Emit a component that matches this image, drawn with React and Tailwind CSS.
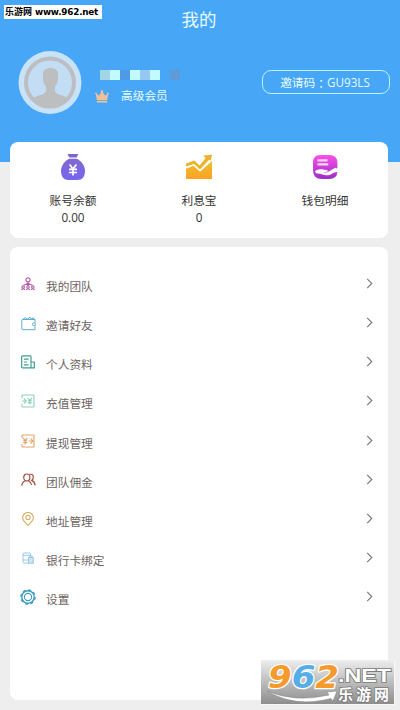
import React from 'react';

const YenSwapIcon = ({ color, reverse }) => (
    <svg className="w-[14px] h-[14px]" viewBox="0 0 14 14" fill="none" stroke={color} strokeWidth="1.1">
        <path d="M1 4V1.5Q1 1 1.5 1H12.5Q13 1 13 1.5V12.5Q13 13 12.5 13H1.5Q1 13 1 12.5V10" />
        <g transform={reverse ? 'translate(-4.6 0)' : undefined}>
            <path d="M6.6 3.8L8.8 6.6L11 3.8M8.8 6.6V10.6M6.8 6.8H10.8M6.8 8.6H10.8" />
        </g>
        <g transform={reverse ? 'translate(6.8 0)' : undefined}>
            <path d="M1 7H5M2.8 4.4L5.2 7L2.8 9.6" />
        </g>
    </svg>
);

const TeamIcon = () => (
    <svg className="w-[14px] h-[14px]" viewBox="0 0 14 14" fill="none" stroke="#b45aa8" strokeWidth="1.1">
        <circle cx="7" cy="2.8" r="2.1" />
        <path d="M7 4.9V9M7 6.2L2.4 8.6M7 6.2L11.6 8.6" />
        <circle cx="2.2" cy="10" r="1.2" />
        <circle cx="7" cy="10" r="1.2" />
        <circle cx="11.8" cy="10" r="1.2" />
        <path d="M0.4 13Q2.2 10.6 4 13M5.2 13Q7 10.6 8.8 13M10 13Q11.8 10.6 13.6 13" />
    </svg>
);

const WalletIcon = () => (
    <svg className="w-[15px] h-[15px]" viewBox="0 0 15 15" fill="none" stroke="#5aaed0" strokeWidth="1">
        <path d="M14 6V3.5H1.5Q0.8 3.5 0.8 4.2V13Q0.8 13.7 1.5 13.7H14V10.5" />
        <path d="M1.5 3.4L4.5 1.6L6 3.2L9 1.2L10.5 3.2L12.5 1.8L13.4 3.4" />
        <path d="M14.2 6.8H12.8Q11.4 7 11.4 8.3T12.8 9.8H14.2Z" />
    </svg>
);

const ProfileIcon = () => (
    <svg className="w-[14px] h-[14px]" viewBox="0 0 14 14" fill="none" stroke="#3c9f90" strokeWidth="1.2">
        <path d="M10 12.8H1.6Q0.7 12.8 0.7 12V1.7Q0.7 0.9 1.6 0.9H9.2Q10 0.9 10 1.7V12.8H13.3V7H10" />
        <path d="M3 4.2H7.6M3 7H6M3 9.8H7.6" />
    </svg>
);

const PeopleIcon = () => (
    <svg className="w-[15px] h-[14px]" viewBox="0 0 15 14" fill="none" stroke="#a4503f" strokeWidth="1.2">
        <ellipse cx="5.8" cy="4.4" rx="3.1" ry="3.4" />
        <path d="M0.8 12.8Q1 8.8 4.4 7.8M7.2 7.8Q10 8.8 10.6 12" />
        <path d="M8.6 1.4Q12.4 0.6 12.3 4.4Q12.2 6.4 10.6 7.4Q13.8 8.6 14.2 12.4" />
    </svg>
);

const PinIcon = () => (
    <svg className="w-[14px] h-[14px]" viewBox="0 0 14 14" fill="none" stroke="#d8ad62" strokeWidth="1.1">
        <path d="M7 13.4Q1.6 8.8 1.6 5.6A5.4 5.1 0 0 1 12.4 5.6Q12.4 8.8 7 13.4Z" />
        <circle cx="7" cy="5.4" r="2.1" />
    </svg>
);

const BankIcon = () => (
    <svg className="w-[12px] h-[12px]" viewBox="0 0 12 12" fill="none" stroke="#8fc4e4" strokeWidth="0.9">
        <path d="M6 11H2Q1 11 1 10V2Q1 1 2 1H7.5Q8.5 1 8.5 2V4M1 3.3H8.5M1 8H6" />
        <path d="M6.5 11.3V5.5H11.3V11.3Z" fill="#c9e6f6" />
        <path d="M7.6 5.3V4.2H10.2V5.3" />
    </svg>
);

const SettingsIcon = () => (
    <svg className="w-4 h-4" viewBox="0 0 16 16" fill="none" stroke="#3d9cbd">
        <circle cx="8" cy="8" r="6.2" strokeWidth="1.4" />
        <circle cx="8" cy="8" r="7.1" strokeWidth="1.4" strokeDasharray="2.8 2.777" />
        <circle cx="8" cy="8" r="3.6" strokeWidth="1.1" />
    </svg>
);

const menuItems = [
    { label: '我的团队', icon: <TeamIcon /> },
    { label: '邀请好友', icon: <WalletIcon /> },
    { label: '个人资料', icon: <ProfileIcon /> },
    { label: '充值管理', icon: <YenSwapIcon color="#8fd0b8" /> },
    { label: '提现管理', icon: <YenSwapIcon color="#e2a468" reverse /> },
    { label: '团队佣金', icon: <PeopleIcon /> },
    { label: '地址管理', icon: <PinIcon /> },
    { label: '银行卡绑定', icon: <BankIcon /> },
    { label: '设置', icon: <SettingsIcon /> },
];

const MoneyBagIcon = () => (
    <svg className="w-[26px] h-[28px]" viewBox="0 0 26 28">
        <defs>
            <linearGradient id="bag" x1="0" y1="0" x2="0" y2="1">
                <stop offset="0" stopColor="#8468d0" />
                <stop offset="1" stopColor="#7566ee" />
            </linearGradient>
        </defs>
        <path d="M8 1H18Q18.6 1 18 1.8L16.6 4.6H9.4L7.8 1.8Q7.5 1 8 1Z" fill="#8065cc" />
        <path d="M9.3 5.8H16.7C22 8.5 25 13.2 25 18C25 23.8 22 27 17.5 27H8.5C4 27 1 23.8 1 18C1 13.2 4 8.5 9.3 5.8Z" fill="url(#bag)" />
        <path d="M9.6 11.5L13 16L16.4 11.5M13 16V22.6M9 16.4H17M9 19.5H17" fill="none" stroke="#fff" strokeWidth="1.7" />
    </svg>
);

const GrowthIcon = () => (
    <svg className="w-[28px] h-[26px]" viewBox="0 0 28 26">
        <defs>
            <linearGradient id="growth" x1="0" y1="0" x2="0" y2="1">
                <stop offset="0" stopColor="#e8c22d" />
                <stop offset="1" stopColor="#ffa024" />
            </linearGradient>
        </defs>
        <path d="M1 25V14.8L8.5 11.8L15 17.8L27 7V25Z" fill="url(#growth)" />
        <path d="M1 12.6V9.6L9.5 6.6L14.5 11.5L20.5 4.2L18.2 1.6L27 0.8L25.8 6.4L23.8 6L15 15.6L9 10Z" fill="#ebb42a" />
    </svg>
);

const WalletDetailIcon = () => (
    <svg className="w-[26px] h-[26px]" viewBox="0 0 26 26">
        <defs>
            <linearGradient id="detail" x1="0" y1="0" x2="0" y2="1">
                <stop offset="0" stopColor="#fc4eea" />
                <stop offset="1" stopColor="#9b2fc7" />
            </linearGradient>
        </defs>
        <path d="M8 1H17Q25.4 1 25.4 9V17Q25.4 25 17 25H10Q1 25 1 16V9Q1 1 8 1Z" fill="url(#detail)" />
        <path d="M5.5 6.3H15.5M5.5 10.3H16.3" stroke="#ffd9fa" strokeWidth="2.2" />
        <path d="M3 17Q6 14.8 9.8 15.2L14.5 16Q16.8 16.6 15 17.8L11.5 18.2Q15 19.2 18 16.8L22.5 14.2Q24.3 13.2 24.4 14.6L26 14V18Q22 17.8 20 19.7Q17 22.2 12.5 20.9Q7.8 19.2 4 19.2Z" fill="#fff" />
    </svg>
);

const stats = [
    { label: '账号余额', value: '0.00', icon: <MoneyBagIcon /> },
    { label: '利息宝', value: '0', icon: <GrowthIcon /> },
    { label: '钱包明细', value: '', icon: <WalletDetailIcon /> },
];

const Avatar = () => (
    <svg className="w-16 h-[63px]" viewBox="0 0 64 63">
        <defs>
            <clipPath id="face">
                <circle cx="32" cy="31.5" r="24" />
            </clipPath>
        </defs>
        <circle cx="32" cy="31.5" r="31.5" fill="#c8e2f8" />
        <circle cx="32" cy="31.5" r="24" fill="#c3ddf4" stroke="#bdbec2" strokeWidth="4" />
        <g clipPath="url(#face)" fill="#bdbebf">
            <path d="M25 25Q24 17 32.5 17T40 25Q40.5 32 37 35.5V40Q38 43 44 44.5Q52 47 54 51V60H10V51Q13 47 21 44.5Q27 43 28 40V35.5Q24.5 32 25 25Z" />
        </g>
    </svg>
);

const CrownIcon = () => (
    <svg className="w-[14px] h-[13px]" viewBox="0 0 14 13" fill="#ecc29a">
        <path d="M0.8 3.6L4 5.5L7 1L10 5.5L13.2 3.6L12.2 10H1.8Z" />
        <path d="M1.8 10.7H12.2V12.6H1.8Z" />
        <circle cx="1" cy="3.4" r="0.9" />
        <circle cx="7" cy="1.4" r="1.2" />
        <circle cx="13" cy="3.4" r="0.9" />
    </svg>
);

const Watermark = () => (
    <div className="absolute left-[261px] top-[660px] w-[134px] h-[45px] bg-linear-to-b from-[#eeeeee] to-[#8e8e8e] border-r border-b border-[#f8f8f8]">
        <svg className="w-full h-full overflow-visible" viewBox="0 0 133 44" fontFamily="'Liberation Sans', 'Noto Sans CJK SC', sans-serif" fontWeight="700">
            <text x="7" y="27.5" fontSize="32" fontFamily="'DejaVu Sans', sans-serif" fontStyle="italic" stroke="#fff" strokeWidth="2.5" paintOrder="stroke" strokeLinejoin="round" textLength="71" lengthAdjust="spacingAndGlyphs">
                <tspan fill="#f59a2c">9</tspan>
                <tspan fill="#55aee8">6</tspan>
                <tspan fill="#f59a2c">2</tspan>
            </text>
            <path d="M6 31Q34 43 68 35L66 32L76 31L72 41L70 38.5Q34 48 6 31Z" fill="#fff" stroke="#8a8a8a" strokeWidth="0.6" />
            <g fill="#fff" stroke="#7c7c7c" strokeWidth="1.6" paintOrder="stroke">
                <text x="77" y="22" fontSize="19" textLength="53" lengthAdjust="spacingAndGlyphs">.NET</text>
                <text x="77" y="40" fontSize="15" textLength="51">乐游网</text>
            </g>
        </svg>
    </div>
);

const App = () => {
    return (
        <div className="relative w-[400px] h-[710px] overflow-hidden bg-[#eeeeee] font-['Open_Sans','Noto_Sans_CJK_SC',sans-serif]">
            {/* Header */}
            <div className="h-[162px] bg-[#48a6f6] text-[#e4fbff]">
                <h1 className="h-[51px] pt-[8px] pr-[2px] text-center text-[17.5px] leading-[22px] font-normal">我的</h1>
                <div className="flex pl-[18px] pr-[10px]">
                    <Avatar />
                    <div className="ml-[13px] pt-[19px]">
                        <div className="flex ml-[5px] h-[10px]">
                            <span className="w-[10px] bg-[#a2d6e4]"></span>
                            <span className="w-[10px] bg-[#c3fafe]"></span>
                            <span className="w-[10px] bg-[#5099e4]"></span>
                            <span className="w-[10px] bg-[#c3fafe]"></span>
                            <span className="w-[10px] bg-[#96c8f2]"></span>
                            <span className="w-[10px] bg-[#c3fafe]"></span>
                            <span className="w-[10px]"></span>
                            <span className="w-[10px] bg-[#609bd8]"></span>
                        </div>
                        <div className="flex items-center mt-[7px] h-[18px] text-[11.7px]">
                            <CrownIcon />
                            <span className="ml-[12px]">高级会员</span>
                        </div>
                    </div>
                    <div className="ml-auto mt-[19px] w-[128px] h-6 rounded-[9px] border border-[#bdf3fb] flex items-center justify-center pr-[2px] pt-px text-[11.7px] whitespace-nowrap">
                        邀请码<span className="font-['Noto_Sans_CJK_TC',sans-serif]">：</span>GU93LS
                    </div>
                </div>
            </div>

            {/* Balance card */}
            <div className="relative mt-[-20px] ml-[10px] w-[378px] h-24 rounded-[8px] bg-white grid grid-cols-3">
                {stats.map(stat => (
                    <div key={stat.label} className="flex flex-col items-center pt-[10px] text-[11.7px] leading-[17px] text-[#333333]">
                        <div className="h-[30px] flex items-center">{stat.icon}</div>
                        <p className="mt-[10px]">{stat.label}</p>
                        <p>{stat.value}</p>
                    </div>
                ))}
            </div>

            {/* Menu */}
            <div className="mt-[9px] ml-[10px] w-[378px] h-[453px] rounded-[8px] bg-white pt-[19px]">
                {menuItems.map(item => (
                    <div key={item.label} className="flex items-center h-[39.15px] pl-[10px] pr-[15px]">
                        <div className="w-4 flex justify-center pb-[3px]">{item.icon}</div>
                        <span className="ml-[10px] pt-[2px] text-[11.7px] leading-[17px] text-[#6c6462]">{item.label}</span>
                        <svg className="ml-auto mb-[4px] w-[7px] h-[11px]" viewBox="0 0 7 11" fill="none" stroke="#777777" strokeWidth="1.1">
                            <path d="M1.2 0.8L5.8 5.5L1.2 10.2" />
                        </svg>
                    </div>
                ))}
            </div>

            {/* Site tags */}
            <div className="absolute left-1 top-[5px] w-[98px] h-[14px] bg-white flex items-center pl-px text-[9px] leading-[14px] font-bold text-black whitespace-nowrap font-['DejaVu_Sans','Noto_Sans_CJK_SC',sans-serif]">
                <span>乐游网</span>
                <span className="ml-[3px] text-[8.8px] tracking-[-0.2px]">www.962.net</span>
            </div>
            <Watermark />
        </div>
    );
};

export default App;
